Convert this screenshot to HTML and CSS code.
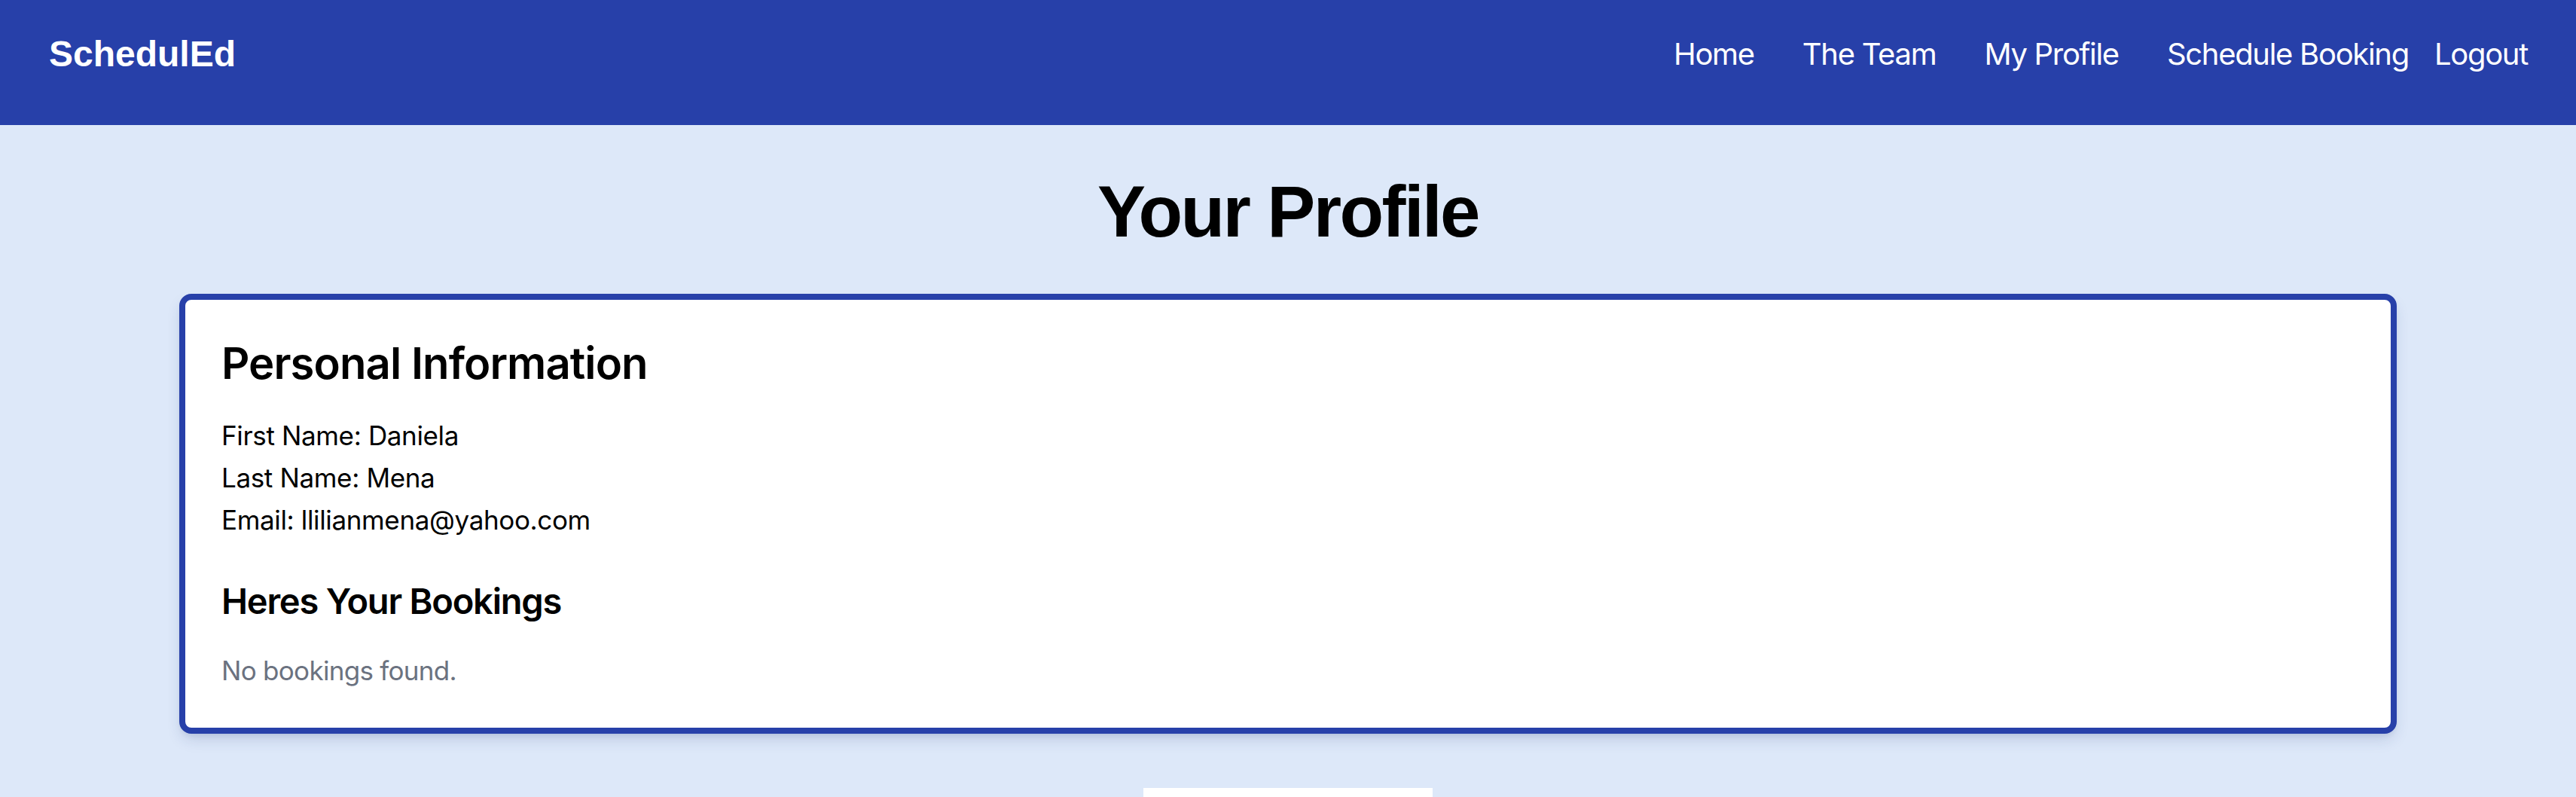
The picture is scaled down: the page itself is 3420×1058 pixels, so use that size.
FILE: index.html
```html
<!DOCTYPE html>
<html lang="en">
<head>
	<meta charset="UTF-8">
	<title>SchedulEd - Your Profile</title>
	<link rel="stylesheet" href="styles.css">
</head>
<body>
	<nav class="navbar">
		<a class="brand" href="">SchedulEd</a>
		<ul class="nav_links">
			<li><a href="">Home</a></li>
			<li><a href="">The Team</a></li>
			<li><a href="">My Profile</a></li>
			<li><a href="">Schedule Booking</a></li>
		</ul>
		<a class="logout" href="">Logout</a>
	</nav>

	<main class="page">
		<h1 class="page_title">Your Profile</h1>

		<section class="card">
			<h2 class="card_title">Personal Information</h2>
			<p class="info_line">First Name: Daniela</p>
			<p class="info_line">Last Name: Mena</p>
			<p class="info_line">Email: llilianmena@yahoo.com</p>

			<h3 class="card_subtitle">Heres Your Bookings</h3>
			<p class="empty_text">No bookings found.</p>
		</section>

		<div class="bottom_box"></div>
	</main>
</body>
</html>
```

FILE: styles.css
```css
body,div,ul,li,h1,h2,h3,p{margin:0;padding:0}
ul{list-style-type: none;}
a{
	text-decoration: none;
	color: #fff;
}

body{
	background-color: #dde8f9;
	font-family: Inter, "Noto Sans", sans-serif;
	color: #000;
}

/* 顶部导航 */
.navbar{
	height: 166px;
	box-sizing: border-box;
	padding: 0 64px 22px 65px;
	background-color: #2740a9;
	display: flex;
	align-items: center;
}
.brand{
	font-family: "Liberation Sans", Arial, sans-serif;
	font-weight: bold;
	font-size: 48px;
	line-height: 64px;
	flex: 1;
}
.nav_links{
	display: flex;
	gap: 64px;
}
.nav_links a,.logout{
	font-size: 40px;
	line-height: 48px;
	letter-spacing: -1.3px;
}
.logout{
	margin-left: 34px;
}

/* 内容 */
.page{
	display: flex;
	flex-direction: column;
	align-items: center;
}
.page_title{
	font-family: "Liberation Sans", Arial, sans-serif;
	font-size: 96px;
	line-height: 96px;
	font-weight: bold;
	letter-spacing: -2.6px;
	margin: 67px 0 61px;
}

.card{
	width: 2944px;
	box-sizing: border-box;
	background: #fff;
	border: 8px solid #2740a9;
	border-radius: 16px;
	padding: 48px;
	box-shadow: 0 10px 20px -4px rgba(30,50,110,0.18), 0 4px 8px -4px rgba(30,50,110,0.12);
}
.card_title{
	font-size: 58px;
	line-height: 72px;
	font-weight: 600;
	margin-bottom: 32px;
	letter-spacing: -0.9px;
}
.info_line{
	font-size: 35px;
	line-height: 56px;
	letter-spacing: -0.35px;
}
.card_subtitle{
	font-size: 47px;
	line-height: 64px;
	font-weight: 600;
	margin: 48px 0 32px;
	letter-spacing: -1.2px;
}
.empty_text{
	font-size: 35px;
	line-height: 56px;
	color: #6b7280;
	letter-spacing: -0.7px;
}

.bottom_box{
	width: 384px;
	height: 80px;
	margin-top: 72px;
	background: #fff;
}
```
